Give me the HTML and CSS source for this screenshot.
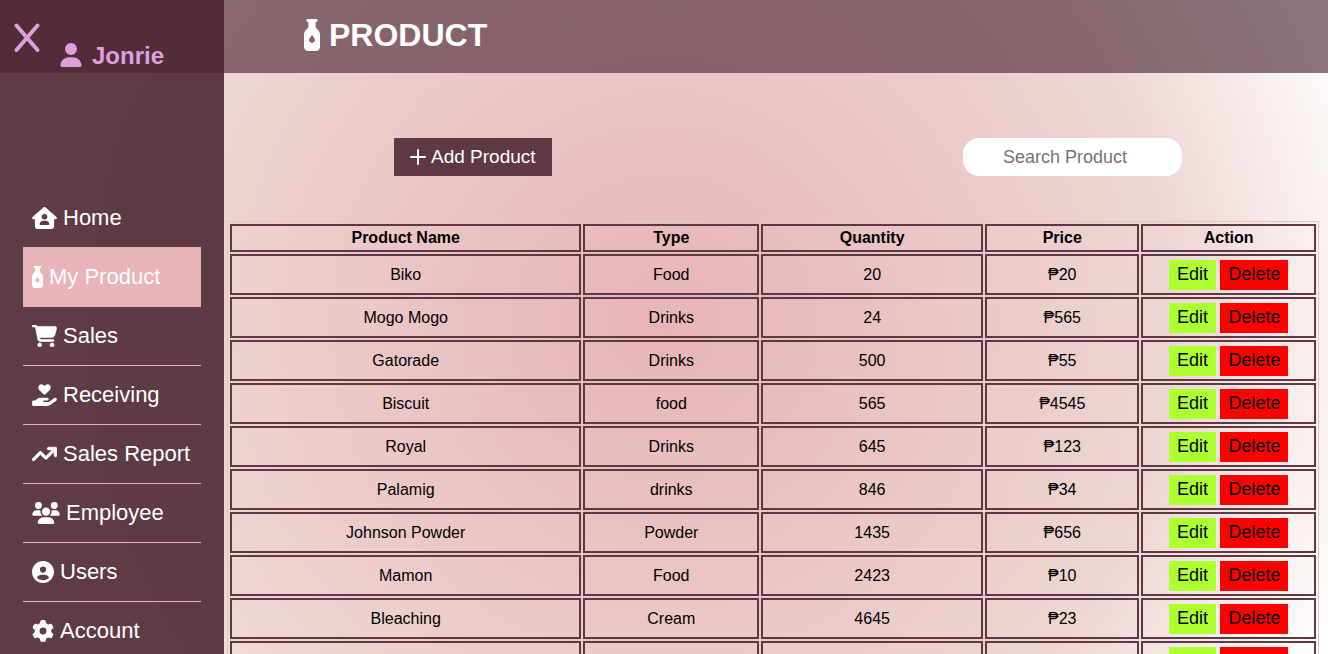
FILE: index.html
```
<!DOCTYPE html>
<html lang="en">
<head>
<meta charset="utf-8">
<meta name="viewport" content="width=device-width, initial-scale=1">
<title>Product</title>
<link rel="stylesheet" href="styles.css">
</head>
<body>
<svg class="sprite" aria-hidden="true">
  <symbol id="bottle" viewBox="32 0 256 512"><path d="M96 0C82.7 0 72 10.7 72 24s10.7 24 24 24c4.4 0 8 3.6 8 8v64.9c0 12.2-7.2 23.1-17.2 30.1C53.7 174.1 32 212.5 32 256V448c0 35.3 28.7 64 64 64H224c35.3 0 64-28.7 64-64V256c0-43.5-21.7-81.9-54.8-105c-10-7-17.2-17.9-17.2-30.1V56c0-4.4 3.6-8 8-8c13.3 0 24-10.7 24-24s-10.7-24-24-24H96zm64 382c-26.5 0-48-20.1-48-45c0-16.8 22.1-48.1 36.3-66.4c6-7.8 17.5-7.8 23.5 0C185.9 288.9 208 320.2 208 337c0 24.9-21.5 45-48 45z"/></symbol>
</svg>
<div class="app">
  <aside class="sidebar">
    <div class="profile">
      <button class="close" type="button" aria-label="Close menu"><svg viewBox="0 0 26 30"><path d="M2.500 2.500 23.500 27M23.500 2.500 2.500 27"/></svg></button>
      <svg class="avatar" viewBox="0 0 448 512" aria-hidden="true"><path d="M224 256A128 128 0 1 0 224 0a128 128 0 1 0 0 256zm-45.700 48C79.800 304 0 383.800 0 482.300C0 498.700 13.300 512 29.700 512H418.300c16.400 0 29.700-13.300 29.700-29.700C448 383.800 368.200 304 269.700 304H178.300z"/></svg>
      <span class="name">Jonrie</span>
    </div>
    <nav>
      <ul class="menu">
        <li><a href="#home"><svg class="icon wide" viewBox="0 0 576 512"><path d="M575.800 255.500c0 18-15 32.100-32 32.100h-32l.7 160.200c.2 35.500-28.500 64.300-64 64.300H128.100c-35.300 0-64-28.700-64-64V287.600H32c-18 0-32-14-32-32.100c0-9 3-17 10-24L266.400 8c7-7 15-8 22-8s15 2 21 7L564.800 231.500c8 7 12 15 11 24zM352 224a64 64 0 1 0 -128 0 64 64 0 1 0 128 0zm-96 96c-44.200 0-80 35.800-80 80c0 8.800 7.200 16 16 16H384c8.800 0 16-7.200 16-16c0-44.200-35.800-80-80-80H256z"/></svg>Home</a></li>
        <li><a class="active" href="#products"><svg class="icon slim"><use href="#bottle"/></svg>My Product</a></li>
        <li><a href="#sales"><svg class="icon wide bold" viewBox="0 0 576 512"><path d="M0 24C0 10.700 10.700 0 24 0H69.500c22 0 41.500 12.800 50.600 32h411c26.300 0 45.500 25 38.600 50.400l-41 152.300c-8.500 31.400-37 53.300-69.500 53.300H170.700l5.400 28.500c2.200 11.300 12.100 19.500 23.600 19.500H488c13.300 0 24 10.700 24 24s-10.700 24-24 24H199.700c-34.600 0-64.300-24.600-70.700-58.500L77.400 54.500c-.7-3.800-4-6.500-7.900-6.500H24C10.700 48 0 37.300 0 24zM128 464a48 48 0 1 1 96 0 48 48 0 1 1 -96 0zm336-48a48 48 0 1 1 0 96 48 48 0 1 1 0-96z"/></svg>Sales</a></li>
        <li><a href="#receiving"><svg class="icon wide" viewBox="0 0 576 512"><path d="M163.900 136.900c-29.400-29.800-29.400-78.200 0-108s77-29.800 106.400 0l17.700 18 17.700-18c29.400-29.800 77-29.800 106.400 0s29.400 78.200 0 108L310.500 240.100c-6.200 6.300-14.300 9.400-22.500 9.400s-16.300-3.100-22.500-9.400L163.900 136.900zM568.200 336.300c13.100 17.800 9.300 42.800-8.500 55.900L433.100 485.500c-23.400 17.200-51.600 26.500-80.700 26.500H32c-17.700 0-32-14.300-32-32V416c0-17.700 14.300-32 32-32H68.800l44.900-36c22.700-18.200 50.900-28 80-28H352c17.700 0 32 14.300 32 32s-14.300 32-32 32H272c-8.800 0-16 7.200-16 16s7.200 16 16 16H392.600l119.700-88.200c17.800-13.100 42.800-9.300 55.900 8.500z"/></svg>Receiving</a></li>
        <li><a href="#report"><svg class="icon wide bold" viewBox="0 0 576 512"><path d="M384 160c-17.700 0-32-14.300-32-32s14.300-32 32-32H544c17.700 0 32 14.300 32 32V288c0 17.700-14.300 32-32 32s-32-14.300-32-32V205.300L342.600 374.600c-12.500 12.500-32.800 12.500-45.300 0L192 269.300 54.600 406.600c-12.500 12.500-32.800 12.500-45.300 0s-12.500-32.800 0-45.300l160-160c12.500-12.500 32.800-12.500 45.300 0L320 306.700 466.700 160H384z"/></svg>Sales Report</a></li>
        <li><a href="#employee"><svg class="icon wider" viewBox="0 0 640 512"><path d="M144 0a80 80 0 1 1 0 160A80 80 0 1 1 144 0zM512 0a80 80 0 1 1 0 160A80 80 0 1 1 512 0zM0 298.700C0 239.800 47.800 192 106.700 192h42.700c15.900 0 31 3.500 44.600 9.700c-1.300 7.200-1.900 14.700-1.900 22.300c0 38.200 16.800 72.500 43.300 96H21.300C9.600 320 0 310.400 0 298.700zM405.300 320c26.600-23.500 43.300-57.800 43.300-96c0-7.600-.7-15-1.900-22.300c13.600-6.300 28.700-9.700 44.600-9.700h42.700C592.200 192 640 239.800 640 298.700c0 11.800-9.600 21.300-21.300 21.300H405.300zM224 224a96 96 0 1 1 192 0 96 96 0 1 1 -192 0zM128 485.300C128 411.700 187.700 352 261.300 352H378.700C452.300 352 512 411.700 512 485.300c0 14.700-11.900 26.700-26.700 26.700H154.700c-14.700 0-26.700-11.900-26.700-26.700z"/></svg>Employee</a></li>
        <li><a href="#users"><svg class="icon" viewBox="0 0 512 512"><path d="M399 384.200C376.900 345.800 335.400 320 288 320H224c-47.400 0-88.900 25.800-111 64.200c35.200 39.200 86.200 63.800 143 63.800s107.800-24.700 143-63.800zM0 256a256 256 0 1 1 512 0A256 256 0 1 1 0 256zm256 16a72 72 0 1 0 0-144 72 72 0 1 0 0 144z"/></svg>Users</a></li>
        <li><a href="#account"><svg class="icon" viewBox="0 0 512 512"><path d="M495.900 166.600c3.200 8.700 .5 18.400-6.400 24.600l-43.300 39.400c1.100 8.300 1.700 16.800 1.700 25.400s-.6 17.100-1.700 25.400l43.300 39.400c6.900 6.200 9.600 15.900 6.400 24.600c-4.400 11.900-9.700 23.300-15.800 34.300l-4.700 8.100c-6.600 11-14 21.400-22.100 31.200c-5.900 7.200-15.700 9.600-24.500 6.800l-55.700-17.700c-13.400 10.300-28.200 18.900-44 25.400l-12.500 57.100c-2 9.100-9 16.300-18.200 17.800c-13.800 2.300-28 3.500-42.500 3.500s-28.700-1.200-42.500-3.500c-9.200-1.500-16.200-8.700-18.200-17.800l-12.500-57.100c-15.800-6.500-30.600-15.100-44-25.400L83.100 425.900c-8.800 2.800-18.600 .3-24.500-6.800c-8.100-9.800-15.500-20.200-22.100-31.200l-4.700-8.100c-6.100-11-11.400-22.400-15.800-34.300c-3.200-8.700-.5-18.400 6.400-24.600l43.300-39.400C64.600 273.100 64 264.600 64 256s.6-17.100 1.700-25.400L22.400 191.200c-6.900-6.200-9.600-15.900-6.400-24.600c4.400-11.900 9.700-23.300 15.800-34.300l4.700-8.100c6.600-11 14-21.400 22.100-31.200c5.900-7.200 15.700-9.600 24.500-6.800l55.700 17.700c13.400-10.300 28.200-18.900 44-25.400l12.500-57.100c2-9.100 9-16.300 18.200-17.800C227.300 1.200 241.500 0 256 0s28.700 1.200 42.500 3.500c9.200 1.500 16.200 8.700 18.200 17.800l12.500 57.100c15.800 6.500 30.600 15.100 44 25.400l55.700-17.700c8.800-2.800 18.600-.3 24.500 6.800c8.100 9.800 15.500 20.200 22.100 31.200l4.700 8.100c6.100 11 11.400 22.400 15.800 34.300zM256 336a80 80 0 1 0 0-160 80 80 0 1 0 0 160z"/></svg>Account</a></li>
      </ul>
    </nav>
  </aside>
  <main class="main">
    <header class="topbar">
      <h1><svg class="title-icon" aria-hidden="true"><use href="#bottle"/></svg>PRODUCT</h1>
    </header>
    <div class="toolbar">
      <button class="add" type="button"><svg viewBox="0 0 16 16" aria-hidden="true"><path d="M8 1V15M1 8H15"/></svg>Add Product</button>
      <input class="search" type="search" placeholder="Search Product" aria-label="Search Product">
    </div>
    <div class="table-area">
      <table>
        <colgroup><col class="c-name"><col class="c-type"><col class="c-qty"><col class="c-price"><col></colgroup>
        <thead><tr><th>Product Name</th><th>Type</th><th>Quantity</th><th>Price</th><th>Action</th></tr></thead>
        <tbody>
          <tr><td>Biko</td><td>Food</td><td>20</td><td>₱20</td><td><button class="edit">Edit</button> <button class="delete">Delete</button></td></tr>
          <tr><td>Mogo Mogo</td><td>Drinks</td><td>24</td><td>₱565</td><td><button class="edit">Edit</button> <button class="delete">Delete</button></td></tr>
          <tr><td>Gatorade</td><td>Drinks</td><td>500</td><td>₱55</td><td><button class="edit">Edit</button> <button class="delete">Delete</button></td></tr>
          <tr><td>Biscuit</td><td>food</td><td>565</td><td>₱4545</td><td><button class="edit">Edit</button> <button class="delete">Delete</button></td></tr>
          <tr><td>Royal</td><td>Drinks</td><td>645</td><td>₱123</td><td><button class="edit">Edit</button> <button class="delete">Delete</button></td></tr>
          <tr><td>Palamig</td><td>drinks</td><td>846</td><td>₱34</td><td><button class="edit">Edit</button> <button class="delete">Delete</button></td></tr>
          <tr><td>Johnson Powder</td><td>Powder</td><td>1435</td><td>₱656</td><td><button class="edit">Edit</button> <button class="delete">Delete</button></td></tr>
          <tr><td>Mamon</td><td>Food</td><td>2423</td><td>₱10</td><td><button class="edit">Edit</button> <button class="delete">Delete</button></td></tr>
          <tr><td>Bleaching</td><td>Cream</td><td>4645</td><td>₱23</td><td><button class="edit">Edit</button> <button class="delete">Delete</button></td></tr>
          <tr><td></td><td></td><td></td><td></td><td><button class="edit">Edit</button> <button class="delete">Delete</button></td></tr>
        </tbody>
      </table>
    </div>
  </main>
</div>
</body>
</html>
```
FILE: styles.css
```
* { box-sizing: border-box; }

body {
  margin: 0;
  font-family: "Liberation Sans", Arial, sans-serif;
  font-size: 16px;
  color: #000;
}

button, input { font-family: inherit; border: 0; margin: 0; }
button { cursor: pointer; }
svg { fill: currentColor; flex: none; }
.sprite { display: none; }

.app {
  display: flex;
  height: 100vh;
  overflow: hidden;
  background: radial-gradient(circle at 50% 50%, #e8b4b8 0%, #eed6d3 510px, #fff 740px);
}

.sidebar {
  flex: none;
  width: 224px;
  background: rgba(84, 48, 58, 0.94);
  color: #fff;
}

.profile {
  display: flex;
  height: 73px;
  padding-left: 14px;
  background: #522c38;
  color: plum;
}

.close {
  width: 26px;
  height: 30px;
  margin: 23px 20px 0 0;
  padding: 0;
  background: none;
  color: inherit;
}

.close svg {
  display: block;
  fill: none;
  stroke: currentColor;
  stroke-width: 4;
  stroke-linecap: round;
}

.avatar { width: 22px; height: 24px; margin: 43px 10px 0 0; }
.name { margin-top: 42px; font-size: 24px; font-weight: bold; line-height: 28px; }

.menu {
  margin: 116px 23px 0;
  padding: 0;
  list-style: none;
}

.menu a {
  display: flex;
  align-items: center;
  gap: 6px;
  height: 59px;
  padding: 0 9px;
  border-bottom: 1px solid #e8b4b8;
  color: #fff;
  font-size: 22px;
  text-decoration: none;
  white-space: nowrap;
}

.menu .active { background: #e8b4b8; }

.icon { width: 22px; height: 22px; }
.icon.slim { width: 11px; }
.icon.wide { width: 25px; }
.icon.wider { width: 28px; }
.icon.bold { stroke: currentColor; stroke-width: 14; }

.main { flex: 1; min-width: 0; }

.topbar {
  height: 73px;
  padding: 17px 80px 16px;
  background: rgba(82, 44, 56, 0.66);
  color: #fff;
}

h1 {
  display: flex;
  align-items: center;
  gap: 9px;
  margin: 0;
  font-size: 32px;
  line-height: 36px;
}

.title-icon { width: 16px; height: 32px; }

.toolbar {
  display: flex;
  justify-content: space-between;
  align-items: center;
  padding: 65px 146px 45px 170px;
}

.add {
  display: flex;
  align-items: center;
  gap: 5px;
  height: 38px;
  padding: 0 16px;
  background: #5e3843;
  color: #fff;
  font-size: 19px;
}

.add svg {
  width: 16px;
  height: 16px;
  fill: none;
  stroke: currentColor;
  stroke-width: 2;
  stroke-linecap: round;
}

.search {
  width: 219px;
  height: 38px;
  padding: 0 20px 0 40px;
  border-radius: 16px;
  background: #fff;
  font-size: 18px;
  appearance: none;
}

.search::placeholder { color: #806e76; opacity: 1; }

.table-area { padding: 0 9px 0 3px; }

table {
  width: 100%;
  table-layout: fixed;
  border: 1px solid #e8c4c6;
  border-spacing: 2px;
  text-align: center;
}

.c-name { width: 32.6%; }
.c-type { width: 16.3%; }
.c-qty { width: 20.6%; }
.c-price { width: 14.3%; }

th, td { padding: 0; border: 2px solid #5e3843; }
th { height: 28px; }
td { height: 41px; }

.edit, .delete {
  height: 30px;
  padding: 0 8px;
  color: #000;
  font-size: 18px;
  vertical-align: middle;
}

.edit { background: greenyellow; }
.delete { background: red; }
```
